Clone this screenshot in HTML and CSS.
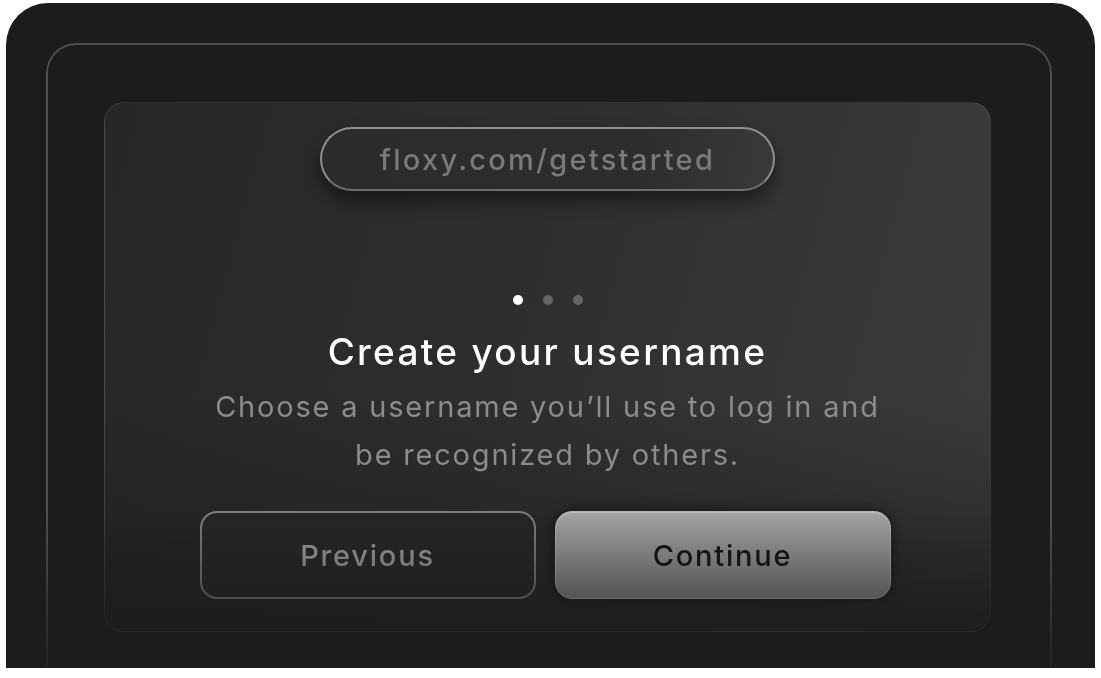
FILE: index.html
```html
<!DOCTYPE html>
<html lang="en">
<head>
<meta charset="utf-8">
<title>Create your username</title>
<link rel="stylesheet" href="styles.css">
</head>
<body>
<div class="device">
  <div class="frame">
    <div class="panel">
      <div class="url-pill">floxy.com/getstarted</div>
      <div class="dots">
        <span class="dot active"></span>
        <span class="dot"></span>
        <span class="dot"></span>
      </div>
      <h1 class="title">Create your username</h1>
      <p class="subtitle">Choose a username you’ll use to log in and<br>be recognized by others.</p>
      <div class="actions">
        <button class="btn btn-secondary">Previous</button>
        <button class="btn btn-primary">Continue</button>
      </div>
    </div>
  </div>
</div>
</body>
</html>
```

FILE: styles.css
```css
html, body {
  margin: 0;
  padding: 0;
  background: #ffffff;
}

body {
  font-family: "Inter", "Noto Sans", sans-serif;
  width: 1101px;
  height: 678px;
  overflow: hidden;
}

.device {
  margin: 3px 6px 0 6px;
  height: 665px;
  box-sizing: border-box;
  background: #1c1c1c;
  border-radius: 42px 42px 0 0;
  padding: 40px 43px 0 40px;
}

.frame {
  height: 625px;
  box-sizing: border-box;
  border: 2px solid #505050;
  border-bottom: none;
  border-radius: 30px 30px 0 0;
  padding: 57px 59px 0 56px;
  -webkit-mask-image: linear-gradient(to bottom, #000 75%, rgba(0,0,0,0.15) 100%);
  mask-image: linear-gradient(to bottom, #000 75%, rgba(0,0,0,0.15) 100%);
}

.panel {
  height: 530px;
  box-sizing: border-box;
  border-radius: 20px;
  border: 1px solid rgba(255,255,255,0.09);
  background:
    linear-gradient(to bottom, rgba(28,28,28,0) 55%, rgba(28,28,28,0.75) 100%),
    linear-gradient(105deg, #272727 0%, #2e2e2e 45%, #3d3d3d 100%);
  display: flex;
  flex-direction: column;
  align-items: center;
  padding-top: 24px;
}

.url-pill {
  width: 455px;
  height: 64px;
  box-sizing: border-box;
  border-radius: 32px;
  border: 2px solid #8f8f8f;
  border-bottom-color: #6e6e6e;
  background: linear-gradient(100deg, #2b2b2b 0%, #2d2d2d 70%, #3a3a3a 100%);
  box-shadow: 0 10px 18px rgba(0,0,0,0.45);
  color: #7a7a7a;
  font-size: 29px;
  font-weight: 500;
  display: flex;
  align-items: center;
  justify-content: center;
  letter-spacing: 2.3px;
}

.dots {
  display: flex;
  gap: 20px;
  margin-top: 104px;
}

.dot {
  width: 10px;
  height: 10px;
  border-radius: 50%;
  background: #666666;
}

.dot.active {
  background: #ffffff;
}

.title {
  margin: 25px 0 0;
  font-size: 37px;
  font-weight: 500;
  color: #ffffff;
  line-height: 44px;
  letter-spacing: 2.3px;
}

.subtitle {
  margin: 9px 0 0;
  font-size: 29px;
  font-weight: 400;
  line-height: 48px;
  color: #8c8c8c;
  text-align: center;
  letter-spacing: 1.8px;
}

.actions {
  display: flex;
  gap: 19px;
  margin-top: 32px;
  margin-right: 5px;
}

.btn {
  width: 336px;
  height: 88px;
  box-sizing: border-box;
  border-radius: 17px;
  font-family: inherit;
  font-size: 29px;
  font-weight: 500;
  letter-spacing: 1.8px;
  cursor: pointer;
}

.btn-secondary {
  background: linear-gradient(180deg, #262626, #242424);
  border: 2px solid #7d7d7d;
  color: #a0a0a0;
}

.btn-primary {
  background: linear-gradient(180deg, #a5a5a5 0%, #969696 60%, #878787 100%);
  border: 1px solid #b4b4b4;
  color: #111111;
  box-shadow: 0 0 14px rgba(0,0,0,0.6), inset 0 1px 0 rgba(255,255,255,0.3);
}
```
